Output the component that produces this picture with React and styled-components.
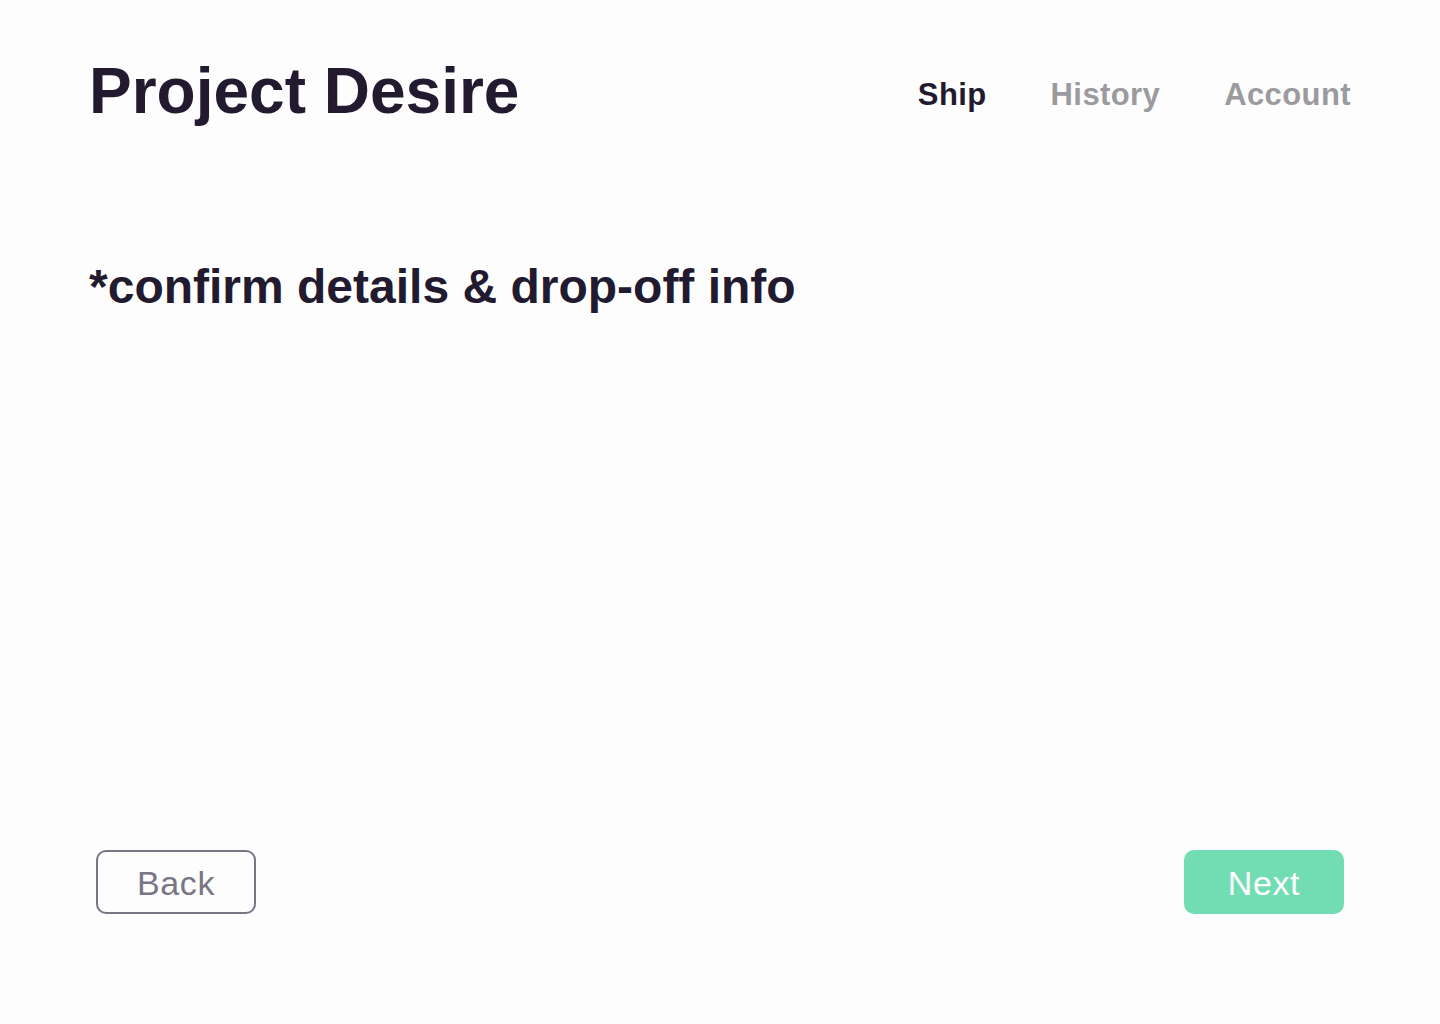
import * as React from "react";
import styled, { createGlobalStyle } from "styled-components";

const ink = "#221a2f";
const muted = "#9b9a9f";

const Global = createGlobalStyle`
  html, body {
    margin: 0;
    padding: 0;
    background: #fdfdfd;
  }
  body {
    font-family: "Liberation Sans", Arial, sans-serif;
    color: ${ink};
  }
`;

const Page = styled.div`
  min-height: 1024px;
  box-sizing: border-box;
  display: flex;
  flex-direction: column;
  padding: 59px 89px 110px;
`;

const Header = styled.header`
  display: flex;
  justify-content: space-between;
  align-items: flex-start;
`;

const Logo = styled.h1`
  margin: 0;
  font-size: 64px;
  line-height: 64px;
  font-weight: 700;
`;

const Nav = styled.nav`
  display: flex;
  gap: 64px;
  margin-top: 20px;
`;

const NavLink = styled.a`
  font-size: 31px;
  line-height: 31px;
  font-weight: 700;
  letter-spacing: 0.4px;
  color: ${props => (props.active ? ink : muted)};
  text-decoration: none;
  cursor: pointer;
`;

const Heading = styled.h2`
  margin: 140px 0 0;
  font-size: 48px;
  line-height: 48px;
  font-weight: 700;
`;

const Spacer = styled.div`
  flex: 1;
`;

const Footer = styled.footer`
  display: flex;
  justify-content: space-between;
  padding: 0 7px;
`;

const Button = styled.button`
  width: 160px;
  height: 64px;
  box-sizing: border-box;
  padding: 2px 0 0;
  border-radius: 10px;
  font-family: "Liberation Sans", Arial, sans-serif;
  font-size: 34px;
  font-weight: 400;
  letter-spacing: 0.6px;
  cursor: pointer;
  border: 2px solid ${props => (props.primary ? "#72ddb3" : "#7a7585")};
  background: ${props => (props.primary ? "#72ddb3" : "transparent")};
  color: ${props => (props.primary ? "#ffffff" : "#7a7585")};
`;

const App = () => {
  const [tab, setTab] = React.useState("Ship");
  return (
    <>
      <Global />
      <Page>
        <Header>
          <Logo>Project Desire</Logo>
          <Nav>
            {["Ship", "History", "Account"].map(name => (
              <NavLink key={name} active={tab === name} onClick={() => setTab(name)}>
                {name}
              </NavLink>
            ))}
          </Nav>
        </Header>
        <Heading>*confirm details &amp; drop-off info</Heading>
        <Spacer />
        <Footer>
          <Button>Back</Button>
          <Button primary>Next</Button>
        </Footer>
      </Page>
    </>
  );
};

export default App;
